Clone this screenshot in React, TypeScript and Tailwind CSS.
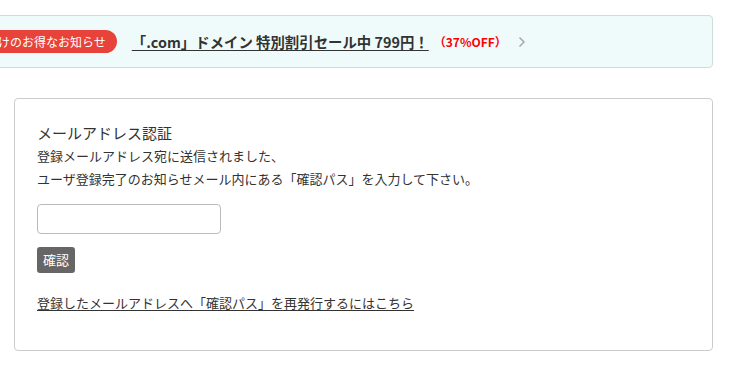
import { ChevronRight } from 'lucide-react';

const jp = { fontFamily: '"Noto Sans CJK JP", "Noto Sans", sans-serif' };

function Banner() {
  return (
    <div className="-ml-[56px] mr-[17px] mt-[15px] flex h-[53px] items-center rounded border border-[#d3dada] bg-[#effbfb]">
      <span className="flex h-[23px] items-center rounded-full bg-[#e8433a] pl-[5px] pr-[11px] text-[12px] text-white">
        お客様向けのお得なお知らせ
      </span>
      <a href="#" className="ml-[15px] text-[14.4px] font-bold text-[#333] underline underline-offset-2">
        「.com」ドメイン 特別割引セール中 799円！
      </a>
      <span className="ml-[5px] text-[12px] font-bold text-[#f00]">（37%OFF）</span>
      <ChevronRight className="ml-[7px] text-[#aaa]" size={16} strokeWidth={2.5} />
    </div>
  );
}

export default function App() {
  return (
    <div className="h-[391px] w-[730px] overflow-hidden bg-white text-[#333]" style={jp}>
      <Banner />
      <div className="ml-[14px] mr-[17px] mt-[30px] h-[253px] rounded border border-[#ccc] px-[22px] pt-[24px]">
        <h2 className="text-[15px] leading-[20px]">メールアドレス認証</h2>
        <p className="mt-[1px] text-[13px] leading-[23px]">
          登録メールアドレス宛に送信されました、
          <br />
          ユーザ登録完了のお知らせメール内にある「確認パス」を入力して下さい。
        </p>
        <input
          type="text"
          className="mt-[14px] block h-[30px] w-[184px] rounded-sm border border-[#bbb] px-2 text-sm"
        />
        <button className="mt-[13px] flex h-[26px] items-center rounded-[3px] bg-[#666] px-[6px] text-[13px] text-white">
          確認
        </button>
        <a href="#" className="mt-[20px] block w-fit text-[13px] leading-[20px] text-[#333] underline underline-offset-2">
          登録したメールアドレスへ「確認パス」を再発行するにはこちら
        </a>
      </div>
    </div>
  );
}
